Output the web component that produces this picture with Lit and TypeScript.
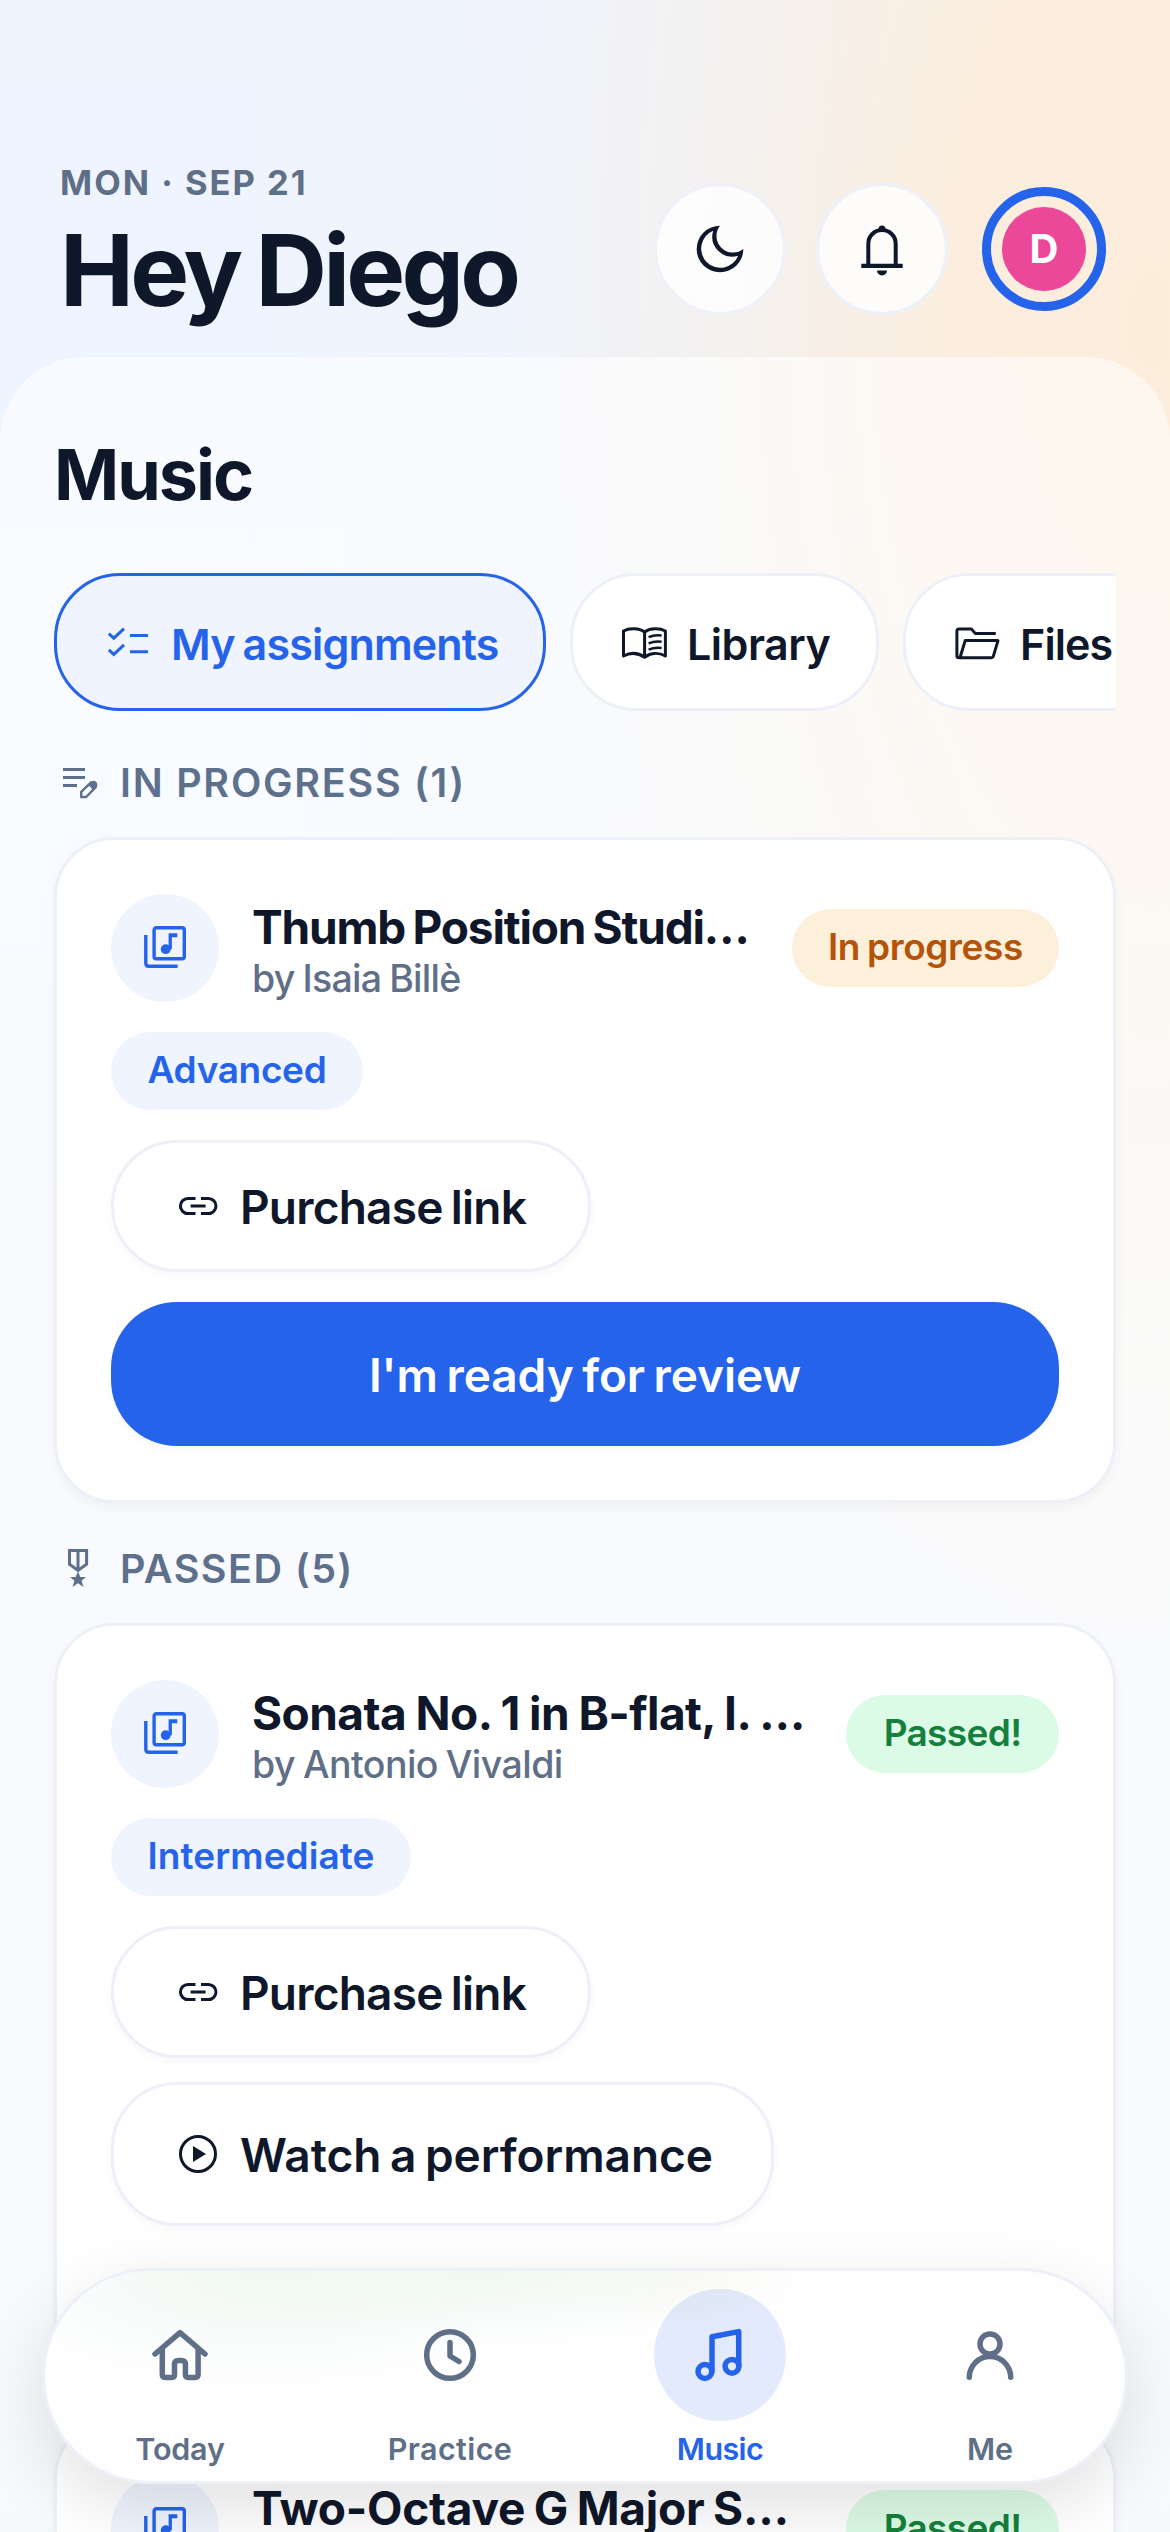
import { LitElement, html, css, svg, nothing } from "lit";
import { customElement } from "lit/decorators.js";
import { classMap } from "lit/directives/class-map.js";

const icons = {
  moon: svg`<path fill-rule="evenodd" fill="currentColor" d="M33 9.7A23.3 23.3 0 1 0 56.3 33A16.6 16.6 0 0 1 33 9.7ZM26.2 14.8A19.2 19.2 0 1 0 51.2 39.8A20 20 0 0 1 26.2 14.8Z"/>`,
  bell: svg`<path fill="none" stroke="currentColor" stroke-width="4" d="M19.3 50V27.7a13.7 13.7 0 0 1 27.4 0V50"/><path fill="currentColor" d="M29.6 16v-3a3.4 3.4 0 0 1 6.8 0v3zM12.3 47.7h41.4v4.3H12.3zM28 54.5h10a5 5 0 0 1-10 0z"/>`,
  checklist: svg`<path fill="none" stroke="currentColor" stroke-width="3" d="M4.8 15.6l5 4.6L20 10.6M4.8 31.8l5 4.6L20 26.8M26 17.6h18M26 33.7h18"/>`,
  book: svg`<path fill="none" stroke="currentColor" stroke-width="3" stroke-linejoin="round" d="M24.6 14C19 9.8 9 9.8 3.5 13V38C10 34.6 18 34.6 24.6 39.2C31 34.6 39 34.6 45.4 38V13C39.5 9.8 30 9.8 24.6 14V39"/><path fill="none" stroke="currentColor" stroke-width="2.5" d="M28.6 19.2q6-2.6 13-1.6M28.6 25.4q6-2.6 13-1.6M28.6 31.6q6-2.6 13-1.6"/>`,
  folder: svg`<path fill="none" stroke="currentColor" stroke-width="3" stroke-linejoin="round" d="M42.8 15.6H22.4L18.4 10.9H6Q3.9 10.9 3.9 13V37.8Q3.9 39.8 6 39.8H38.4Q39.9 39.8 40.3 38.4L45 22.6H12.2L7.2 39"/>`,
  editNote: svg`<path fill="none" stroke="currentColor" stroke-width="3" d="M3 13.4h22M3 21.5h22M3 29.6h14"/><path fill="none" stroke="currentColor" stroke-width="2.4" stroke-linejoin="round" d="M21.2 41v-5.2l9.8-9.5 4.8 4.8L26.2 41z"/><path fill="currentColor" d="M28.2 29l3.4-3.4q2-1.6 4 0l1 1q1.6 2 0 4L33.200 34z"/>`,
  medal: svg`<path fill="none" stroke="currentColor" stroke-width="3" d="M9.5 8.4H26.6V22.2L18 28.5L9.500 22.200ZM18 8.400V27"/><path fill="currentColor" d="M18 29.500l2.300 5.600h5.700l-4.400 3.700 1.900 6.200-5.500-3.800-5.500 3.800 1.900-6.200-4.400-3.700h5.700z"/>`,
  score: svg`<rect x="10.1" y="1.7" width="30.2" height="31" rx="2.2" fill="none" stroke="currentColor" stroke-width="3.4"/><path fill="none" stroke="currentColor" stroke-width="3.4" d="M1.8 9V37.3Q1.8 40.3 4.8 40.3H33.6"/><circle cx="21.7" cy="23.2" r="4.9" fill="currentColor"/><path fill="currentColor" d="M24.6 7.3h8.7v4h-5.4v12h-3.3z"/>`,
  link: svg`<path fill="none" stroke="currentColor" stroke-width="3" d="M20.5 15.4H13a7.6 7.6 0 0 0 0 15.2h7.5M26 15.4h7.4a7.6 7.6 0 0 1 0 15.2H26M15.6 23h15"/>`,
  play: svg`<circle cx="23" cy="23" r="17.500" fill="none" stroke="currentColor" stroke-width="3"/><path fill="currentColor" d="M18 15l13 8-13 8z"/>`,
  home: svg`<path fill="none" stroke="currentColor" stroke-width="5.5" stroke-linecap="round" stroke-linejoin="round" d="M8 32L33 10.7L58 32M15.3 27V52.5q0 2.9 2.9 2.9h6.4q2.9 0 2.9-2.9V42.5q0-4 4-4h2.9q4 0 4 4v10q0 2.9 2.9 2.9h6.9q2.9 0 2.9-2.9V27"/>`,
  clock: svg`<g fill="none" stroke="currentColor" stroke-width="5.5" stroke-linecap="round" stroke-linejoin="round"><circle cx="33" cy="33" r="23.3"/><path d="M33 20.5V34l9 5.5"/></g>`,
  notes: svg`<g fill="none" stroke="currentColor" stroke-width="5.5" stroke-linecap="round" stroke-linejoin="round"><path d="M25 49.5V14.7L51.7 9.6V44"/><circle cx="17.9" cy="49.5" r="6.9"/><circle cx="45" cy="44.3" r="6.9"/></g>`,
  person: svg`<g fill="none" stroke="currentColor" stroke-width="5.5" stroke-linecap="round"><circle cx="33" cy="22" r="10"/><path d="M12.3 55.3a20.7 20.7 0 0 1 41.4 0"/></g>`,
};

type IconName = keyof typeof icons;

const icon = (name: IconName, w: number, h = w) =>
  html`<svg class="icon" width=${w} height=${h} viewBox="0 0 ${w} ${h}" aria-hidden="true">${icons[name]}</svg>`;

interface Piece {
  title: string;
  kind: string;
  composer: string;
  status: string;
  passed: boolean;
  level: string;
  watch: boolean;
  review: boolean;
}

const current: Piece[] = [
  { title: "Thumb Position Studi…", kind: "thumb", composer: "by Isaia Billè", status: "In progress", passed: false, level: "Advanced", watch: false, review: true },
];

const passed: Piece[] = [
  { title: "Sonata No. 1 in B-flat, I. …", kind: "sonata", composer: "by Antonio Vivaldi", status: "Passed!", passed: true, level: "Intermediate", watch: true, review: false },
  { title: "Two-Octave G Major S…", kind: "octave", composer: "", status: "Passed!", passed: true, level: "", watch: false, review: false },
];

const tabs: { icon: IconName; label: string; cls: string }[] = [
  { icon: "home", label: "Today", cls: "today" },
  { icon: "clock", label: "Practice", cls: "practice" },
  { icon: "notes", label: "Music", cls: "active" },
  { icon: "person", label: "Me", cls: "me" },
];

@customElement("app-root")
export class AppRoot extends LitElement {
  static styles = css`
    :host {
      display: block;
      position: relative;
      box-sizing: border-box;
      height: 2532px;
      overflow: hidden;
      font-family: "Inter", "Liberation Sans", sans-serif;
      color: #0f172a;
      background:
        radial-gradient(ellipse 900px 1900px at 1150px 320px, rgba(252, 237, 219, 1) 0%, rgba(252, 237, 219, 0.92) 22%, rgba(250, 238, 222, 0.5) 46%, rgba(246, 240, 232, 0.18) 70%, rgba(246, 240, 232, 0) 100%),
        linear-gradient(180deg, #eff4ff 0%, #eef5ff 30%, #f0f4fa 58%, #edf3f6 100%);
    }
    *, *::before { box-sizing: border-box; }
    .icon { display: block; flex: none; }

    .header { display: flex; justify-content: space-between; align-items: center; height: 357px; padding: 138px 60px 0; }
    .hello { display: flex; flex-direction: column; height: 175px; }
    .date { font-size: 34.5px; line-height: 45px; font-weight: 700; letter-spacing: 2px; color: #5f6f87; white-space: nowrap; }
    .greet { font-size: 99px; line-height: 130px; font-weight: 700; letter-spacing: -3.8px; word-spacing: -3.5px; white-space: nowrap; margin: 0; }
    .actions { display: flex; gap: 30px; padding-top: 3px; }
    .round { display: grid; place-items: center; width: 132px; height: 132px; border-radius: 50%; border: 3px solid #eef1f9; background: rgba(255, 255, 255, 0.8); background-clip: padding-box; }
    .profile { display: grid; place-items: center; width: 132px; height: 132px; }
    .ring { display: grid; place-items: center; width: 124px; height: 124px; border: 9px solid #2563eb; border-radius: 50%; }
    .avatar { display: grid; place-items: center; width: 84px; height: 84px; border-radius: 50%; background: #ec4899; color: #fff; font-weight: 700; font-size: 40px; line-height: 84px; }

    .sheet { height: 2175px; padding: 73px 54px 0; border-radius: 84px 84px 0 0; background: rgba(255, 255, 255, 0.58); overflow: hidden; }
    .page-title { margin: 0 0 53px; font-size: 70px; line-height: 90px; font-weight: 700; letter-spacing: -2px; }
    .chips { display: flex; gap: 24px; overflow: hidden; }
    .chip { flex: none; display: flex; align-items: center; gap: 19px; height: 138px; padding-left: 47px; border: 3px solid #edf0f8; border-radius: 66px; background: #fff; font-size: 43px; font-weight: 600; line-height: 60px; white-space: nowrap; }
    .chip .text { padding-top: 4px; }
    .chip.assignments { width: 492px; letter-spacing: -0.85px; word-spacing: -2px; color: #2563eb; border-color: #2563eb; background: #eff4ff; }
    .chip.library { width: 309px; letter-spacing: -0.5px; }
    .chip.files { width: 300px; letter-spacing: -0.9px; }

    .section { display: flex; align-items: center; gap: 18px; height: 54px; margin: 39px 0 27px 6px; color: #5d708c; font-size: 39.5px; font-weight: 600; line-height: 54px; letter-spacing: 1.5px; white-space: nowrap; }
    .section.first { margin-top: 45px; letter-spacing: 1.75px; }

    .card { display: flex; flex-direction: column; align-items: flex-start; padding: 54px; border: 3px solid #edf0f8; border-radius: 60px; background: #fff; box-shadow: 0 5px 12px rgba(15, 23, 42, 0.04); margin-bottom: 24px; }
    .card.passed { height: 771px; }
    .head { display: flex; align-items: center; width: 100%; height: 108px; margin-bottom: 30px; }
    .disc { flex: none; display: grid; place-items: center; width: 108px; height: 108px; padding-bottom: 2px; border-radius: 50%; background: #eff4ff; color: #2563eb; }
    .names { flex: 1; min-width: 0; padding: 2px 0 0 33px; white-space: nowrap; }
    .title { font-size: 46px; line-height: 60px; font-weight: 700; }
    .title.thumb { letter-spacing: -1.15px; word-spacing: -2.5px; }
    .title.sonata { letter-spacing: -0.55px; word-spacing: -1px; }
    .title.octave { letter-spacing: -0.25px; word-spacing: -2px; }
    .composer { height: 44px; font-size: 37.5px; line-height: 44px; font-weight: 450; color: #5f6f87; letter-spacing: -0.55px; word-spacing: -1.5px; }
    .thumb + .composer { letter-spacing: -0.7px; }
    .pill { flex: none; display: flex; justify-content: center; height: 78px; border-radius: 39px; font-size: 37px; line-height: 75px; font-weight: 600; white-space: nowrap; }
    .status { width: 267px; letter-spacing: -0.39px; word-spacing: -2px; background: #fdf0da; color: #b45309; }
    .status.ok { width: 213px; letter-spacing: -0.65px; background: #dcfbe6; color: #15803d; }
    .level { width: 252px; letter-spacing: -0.35px; background: #eff4ff; color: #2563eb; }
    .level.wide { width: 300px; letter-spacing: 0.05px; }
    .button { display: flex; align-items: center; gap: 19px; height: 132px; margin-top: 30px; padding-left: 61px; border: 3px solid #edf0f8; border-radius: 66px; background: #fff; box-shadow: 0 4px 9px rgba(15, 23, 42, 0.03); font-size: 46px; line-height: 62px; font-weight: 600; white-space: nowrap; }
    .button .text { padding-top: 2px; }
    .purchase { width: 480px; letter-spacing: -0.8px; word-spacing: -2.5px; }
    .watch { width: 663px; height: 144px; margin-top: 24px; letter-spacing: -0.03px; word-spacing: -3px; }
    .review { width: 100%; height: 144px; padding: 0; justify-content: center; border: 0; background: #2563eb; color: #fff; letter-spacing: -0.05px; word-spacing: -3px; }

    .nav { position: absolute; left: 42px; right: 42px; bottom: 48px; height: 216px; display: grid; grid-template-columns: repeat(4, 270px); justify-content: center; padding-top: 18px; border: 3px solid #edf0f8; border-radius: 108px;
      background:
        radial-gradient(ellipse 300px 70px at 440px 0, rgba(241, 248, 243, 1) 0%, rgba(241, 248, 243, 0.6) 50%, rgba(241, 248, 243, 0) 100%),
        radial-gradient(ellipse 280px 110px at 220px 0, rgba(241, 248, 243, 1) 0%, rgba(241, 248, 243, 0.6) 50%, rgba(241, 248, 243, 0) 100%),
        radial-gradient(ellipse 110px 60px at 640px 0, rgba(253, 250, 244, 1) 0%, rgba(253, 250, 244, 0) 100%),
        #fefeff;
      background-clip: padding-box;
      box-shadow: 0 24px 72px rgba(0, 0, 0, 0.12); }
    .tab { display: flex; flex-direction: column; align-items: center; color: #5f6f87; font-size: 30.5px; line-height: 40px; font-weight: 600; }
    .spot { display: grid; place-items: center; width: 132px; height: 132px; margin-bottom: 8px; border-radius: 50%; }
    .tab.today { letter-spacing: -0.2px; }
    .tab.practice { letter-spacing: 0.39px; }
    .tab.me { letter-spacing: -0.13px; }
    .tab.active { color: #2563eb; letter-spacing: -0.6px; }
    .tab.active .spot { background: rgba(37, 99, 235, 0.13); }
  `;

  private card(p: Piece) {
    return html`
      <article class=${classMap({ card: true, passed: p.passed })}>
        <div class="head">
          <div class="disc">${icon("score", 42)}</div>
          <div class="names">
            <div class="title ${p.kind}">${p.title}</div>
            <div class="composer">${p.composer}</div>
          </div>
          <span class=${classMap({ pill: true, status: true, ok: p.passed })}>${p.status}</span>
        </div>
        ${p.level
          ? html`<span class=${classMap({ pill: true, level: true, wide: p.passed })}>${p.level}</span>
              <div class="button purchase">${icon("link", 46)}<span class="text">Purchase link</span></div>`
          : nothing}
        ${p.watch
          ? html`<div class="button watch">${icon("play", 46)}<span class="text">Watch a performance</span></div>`
          : nothing}
        ${p.review ? html`<div class="button review"><span class="text">I'm ready for review</span></div>` : nothing}
      </article>
    `;
  }

  render() {
    return html`
      <header class="header">
        <div class="hello">
          <div class="date">MON · SEP 21</div>
          <h1 class="greet">Hey Diego</h1>
        </div>
        <div class="actions">
          <div class="round">${icon("moon", 66)}</div>
          <div class="round">${icon("bell", 66)}</div>
          <div class="profile"><div class="ring"><div class="avatar">D</div></div></div>
        </div>
      </header>
      <main class="sheet">
        <h2 class="page-title">Music</h2>
        <div class="chips">
          <div class="chip assignments">${icon("checklist", 48)}<span class="text">My assignments</span></div>
          <div class="chip library">${icon("book", 48)}<span class="text">Library</span></div>
          <div class="chip files">${icon("folder", 48)}<span class="text">Files</span></div>
        </div>
        <div class="section first">${icon("editNote", 42, 54)}<span>IN PROGRESS (1)</span></div>
        ${current.map((p) => this.card(p))}
        <div class="section">${icon("medal", 42, 54)}<span>PASSED (5)</span></div>
        ${passed.map((p) => this.card(p))}
      </main>
      <nav class="nav">
        ${tabs.map(
          (t) => html`<div class="tab ${t.cls}"><div class="spot">${icon(t.icon, 66)}</div><span>${t.label}</span></div>`
        )}
      </nav>
    `;
  }
}
